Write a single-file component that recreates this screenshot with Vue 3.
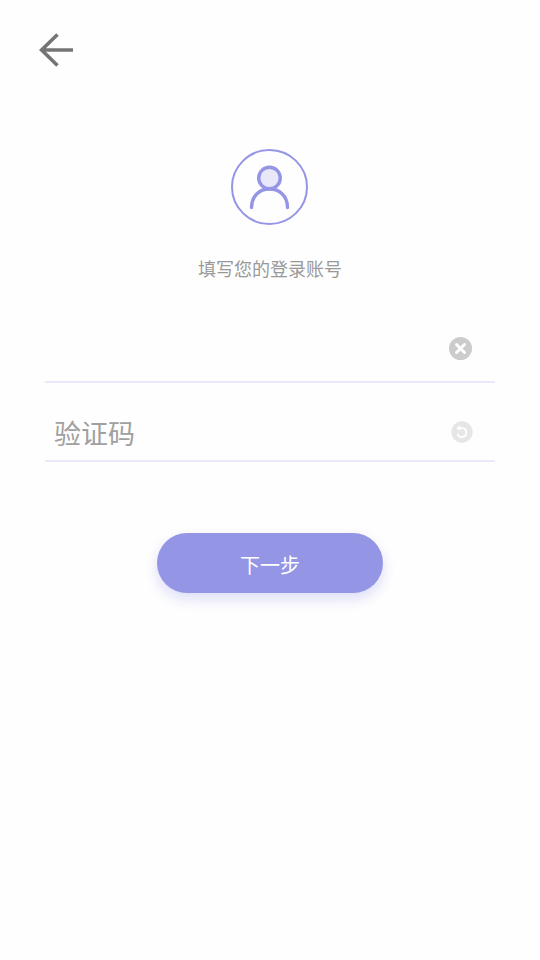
<script setup>
import { ref } from 'vue'

const account = ref('')
const code = ref('')

function refreshCode() {
  code.value = ''
}
</script>

<template>
  <div class="page">
    <header class="top">
      <button class="icon-button back" type="button" aria-label="返回">
        <svg width="36" height="36" viewBox="0 0 36 36" fill="none" stroke="#757575" stroke-width="3.6">
          <path d="M35 18H3.4M19.5 2.5L3.6 18L19.5 33.5" />
        </svg>
      </button>
    </header>

    <main class="content">
      <svg class="avatar" width="78" height="78" viewBox="0 0 78 78" fill="none" stroke="#9595e5" aria-hidden="true">
        <ellipse cx="38.5" cy="39" rx="37.5" ry="37" stroke-width="2" />
        <path d="M20.5 59.5C20.5 48 28.5 41 38.5 41S56.5 48 56.5 59.5" stroke-width="3.4" stroke-linecap="round" />
        <circle cx="38.5" cy="30" r="10.8" fill="#e9e8f9" stroke-width="3.4" />
      </svg>
      <h1 class="title">填写您的登录账号</h1>

      <form class="form" @submit.prevent>
        <div class="field">
          <input v-model="account" class="input" type="text" aria-label="账号" />
          <button class="icon-button clear" type="button" aria-label="清除" @click="account = ''">
            <svg width="24" height="24" viewBox="0 0 24 24" fill="none">
              <circle cx="11.5" cy="11.5" r="11.5" fill="#cccccc" />
              <path d="M7.5 7.5L15.5 15.5M15.5 7.5L7.5 15.5" stroke="#fff" stroke-width="3" stroke-linecap="round" />
            </svg>
          </button>
        </div>
        <div class="field">
          <input v-model="code" class="input" type="text" placeholder="验证码" aria-label="验证码" />
          <button class="icon-button refresh" type="button" aria-label="刷新验证码" @click="refreshCode">
            <svg width="22" height="22" viewBox="0 0 22 22" fill="none">
              <circle cx="11" cy="11" r="10.7" fill="#e6e6e6" />
              <path d="M8.5 7.2H11.2A4.4 4.4 0 1 1 6.8 13.2" stroke="#fff" stroke-width="1.7" stroke-linecap="round" />
              <path d="M5.2 7.2L9.2 4.2V10Z" fill="#fff" />
            </svg>
          </button>
        </div>
        <button class="next" type="submit">下一步</button>
      </form>
    </main>
  </div>
</template>

<style>
body {
  background: #fefefe;
}
</style>

<style scoped>
.page {
  font-family: "Noto Sans CJK SC", sans-serif;
}

.top {
  display: flex;
  padding: 32px 38px;
}

.icon-button {
  display: block;
  flex: none;
  padding: 0;
  border: 0;
  background: none;
  cursor: pointer;
}

.icon-button svg {
  display: block;
}

.content {
  display: flex;
  flex-direction: column;
  align-items: center;
  padding: 48px 45px;
}

.avatar {
  display: block;
}

.title {
  margin: 28px 0 0;
  color: #999;
  font-size: 18px;
  font-weight: 400;
  line-height: 28px;
}

.form {
  display: flex;
  flex-direction: column;
  align-items: center;
  width: 100%;
  margin-top: 47px;
}

.field {
  display: flex;
  align-items: center;
  box-sizing: border-box;
  width: 100%;
  padding: 0 22px 12px 9px;
  border-bottom: 2px solid #e8e9fa;
}

.field + .field {
  padding-top: 29px;
  padding-bottom: 8px;
}

.input {
  flex: 1;
  min-width: 0;
  height: 40px;
  padding: 0;
  border: 0;
  outline: 0;
  background: none;
  color: #666;
  font-family: inherit;
  font-size: 27px;
}

.input::placeholder {
  color: #a0a0a0;
  opacity: 1;
}

.next {
  width: 226px;
  height: 60px;
  margin-top: 71px;
  padding: 2px 0 0;
  border: 0;
  border-radius: 30px;
  background: #9595e5;
  box-shadow: 0 6px 14px #dcdcf8;
  color: #fff;
  font-family: inherit;
  font-size: 20px;
  font-weight: 400;
  cursor: pointer;
}
</style>
